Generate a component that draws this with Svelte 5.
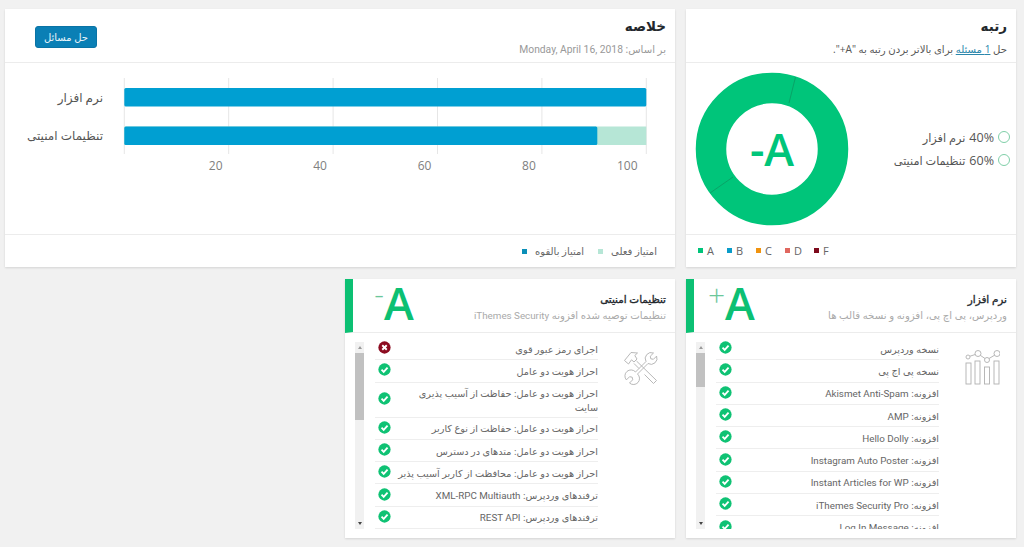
<script lang="ts">
  const software = [
    { ar: 'نسخه وردپرس', en: '', ok: true },
    { ar: 'نسخه پی اچ پی', en: '', ok: true },
    { ar: 'افزونه:', en: 'Akismet Anti-Spam', ok: true },
    { ar: 'افزونه:', en: 'AMP', ok: true },
    { ar: 'افزونه:', en: 'Hello Dolly', ok: true },
    { ar: 'افزونه:', en: 'Instagram Auto Poster', ok: true },
    { ar: 'افزونه:', en: 'Instant Articles for WP', ok: true },
    { ar: 'افزونه:', en: 'iThemes Security Pro', ok: true },
    { ar: 'افزونه:', en: 'Log In Message', ok: true }
  ];

  const security = [
    { ar: 'اجرای رمز عبور قوی', en: '', ok: false },
    { ar: 'احراز هویت دو عامل', en: '', ok: true },
    { ar: 'احراز هویت دو عامل: حفاظت از آسیب پذیری\nسایت', en: '', ok: true },
    { ar: 'احراز هویت دو عامل: حفاظت از نوع کاربر', en: '', ok: true },
    { ar: 'احراز هویت دو عامل: متدهای در دسترس', en: '', ok: true },
    { ar: 'احراز هویت دو عامل: محافظت از کاربر آسیب پذیر', en: '', ok: true },
    { ar: 'ترفندهای وردپرس:', en: 'XML-RPC Multiauth', ok: true },
    { ar: 'ترفندهای وردپرس:', en: 'REST API', ok: true }
  ];

  const grades = [
    { name: 'A', color: '#00c47a' },
    { name: 'B', color: '#0a9cc9' },
    { name: 'C', color: '#f0930f' },
    { name: 'D', color: '#e0675f' },
    { name: 'F', color: '#7d0a1c' }
  ];

  // chart scale: 0..100 maps onto x 0..522 of the plot
  const x = (v: number) => 119.3 + (v / 100) * 522;
  const ticks = [20, 40, 60, 80, 100];
</script>

{#snippet status(ok: boolean)}
  <svg class="status" viewBox="0 0 14 14" aria-hidden="true">
    <circle cx="7" cy="7" r="6.6" fill={ok ? '#0fc274' : '#8c0b20'} />
    {#if ok}
      <path d="M3.8 7.2 6.1 9.5 10.3 5" fill="none" stroke="#fff" stroke-width="2" />
    {:else}
      <path d="M4.6 4.6 9.4 9.4M9.4 4.6 4.6 9.4" fill="none" stroke="#fff" stroke-width="2" />
    {/if}
  </svg>
{/snippet}

{#snippet checklist(items: { ar: string; en: string; ok: boolean }[], thumb: string)}
  <ul class="checks">
    {#each items as item}
      <li>
        <span class="check-label">{item.ar}{#if item.en}{' '}<bdi class="en">{item.en}</bdi>{/if}</span>
        {@render status(item.ok)}
      </li>
    {/each}
  </ul>
  <div class="scrollbar" aria-hidden="true">
    <span class="arrow up"></span>
    <div class="track"><div class="thumb {thumb}"></div></div>
    <span class="arrow down"></span>
  </div>
{/snippet}

<main class="dashboard" dir="rtl">
  <section class="card grade-card">
    <header class="head">
      <h2>رتبه</h2>
      <p class="dark">حل <a href="#issues">1 مسئله</a> برای بالاتر بردن رتبه به "A+".</p>
    </header>
    <div class="grade-body">
      <ul class="shares">
        <li><i></i><b>40%</b> نرم افزار</li>
        <li><i></i><b>60%</b> تنظیمات امنیتی</li>
      </ul>
      <div class="donut">
        <svg viewBox="0 0 154 154" aria-hidden="true">
          <circle cx="77" cy="77" r="61" fill="none" stroke="#00c57a" stroke-width="30.5" />
          <path d="M94 31 100.500 5M38 105 15 121" stroke="#0b9a62" stroke-width="0.8" />
        </svg>
        <span class="donut-grade">A-</span>
      </div>
    </div>
    <footer class="foot grade-legend" dir="ltr">
      {#each grades as g}
        <span><i style="background:{g.color}"></i>{g.name}</span>
      {/each}
    </footer>
  </section>

  <section class="card summary-card">
    <header class="head summary-head">
      <div>
        <h2>خلاصه</h2>
        <p>بر اساس: <bdi class="en date">Monday, April 16, 2018</bdi></p>
      </div>
      <button type="button">حل مسائل</button>
    </header>
    <div class="chart">
      <svg viewBox="0 0 670 172" role="img" aria-label="نمودار خلاصه">
        {#each [0, ...ticks] as t}
          <line x1={x(t)} x2={x(t)} y1="15" y2="91" stroke="#e6e6e6" />
        {/each}
        <rect x={x(0)} y="25" width="522" height="18.500" rx="1.500" fill="#009fd2" />
        <rect x={x(0)} y="63.500" width="522" height="18.500" fill="#b6e6d6" />
        <rect x={x(0)} y="63.500" width="473" height="18.500" rx="1.500" fill="#009fd2" />
        <text class="cat" x="98" y="39">نرم افزار</text>
        <text class="cat" x="98" y="77">تنظیمات امنیتی</text>
        {#each ticks as t}
          <text class="tick" x={x(t) - (t === 100 ? 19 : 13)} y="107">{t}</text>
        {/each}
      </svg>
    </div>
    <footer class="foot summary-legend">
      <span>امتیاز فعلی<i class="light"></i></span>
      <span>امتیاز بالقوه<i class="blue"></i></span>
    </footer>
  </section>

  <section class="card detail software">
    <header class="detail-head">
      <div class="detail-title">
        <h3>نرم افزار</h3>
        <p>وردپرس، پی اچ پی، افزونه و نسخه قالب ها</p>
      </div>
      <span class="letter" dir="ltr"><sup>+</sup>A</span>
    </header>
    <div class="detail-body">
      <svg class="tool" viewBox="0 0 36 36" aria-hidden="true">
        <rect x="2" y="13" width="5" height="21" />
        <rect x="11" y="11" width="5" height="23" />
        <rect x="20.500" y="17" width="5" height="17" />
        <rect x="30" y="11" width="5" height="23" />
        <circle cx="4" cy="7" r="2" />
        <circle cx="14" cy="3.500" r="3" />
        <circle cx="23" cy="10" r="2.500" />
        <circle cx="33" cy="3.500" r="3" />
        <path d="M6 6.200 11.200 4.500M16.400 5.400 21 8.500M25 8.500 30.600 5.200" />
      </svg>
      {@render checklist(software, 'short')}
    </div>
  </section>

  <section class="card detail security">
    <header class="detail-head">
      <div class="detail-title">
        <h3>تنظیمات امنیتی</h3>
        <p>تنظیمات توصیه شده افزونه <bdi class="en">iThemes Security</bdi></p>
      </div>
      <span class="letter minus" dir="ltr"><sup>-</sup>A</span>
    </header>
    <div class="detail-body">
      <svg class="tool" viewBox="0 0 36 36" aria-hidden="true">
        <path d="M12.500 22 23 11.500A6 6 0 0 1 30.500 3L27.300 6.200 27.800 8.800 30.400 9.300 33.600 6.100A6 6 0 0 1 25 13.500L14.500 24A6 6 0 0 1 6.500 33L9.700 29.800 9.200 27.200 6.600 26.700 3.400 29.900A6 6 0 0 1 12.500 22Z" />
        <path d="M1.500 10.500 8 2.500 14.500 3 11.800 5.500 14 9 11 12 8.500 9.800 5.500 14ZM13.500 11 33.500 30.500 30.500 33.500 21.500 24.500M11 13.500 16 18.500" />
      </svg>
      {@render checklist(security, 'long')}
    </div>
  </section>
</main>

<style>
  :global(body) {
    background: #f1f1f1;
  }

  .dashboard {
    box-sizing: border-box;
    width: 1024px;
    height: 547px;
    padding: 9px 8px 0 5px;
    display: grid;
    grid-template-columns: 330px 330px 329px;
    grid-template-rows: 258px 259px;
    column-gap: 11px;
    row-gap: 12px;
    font-family: "Open Sans", "DejaVu Sans", sans-serif;
    font-size: 10px;
    color: #666;
    overflow: hidden;
  }

  .card {
    background: #fff;
    box-shadow: 0 1px 2px rgba(0, 0, 0, 0.12);
    display: flex;
    flex-direction: column;
    min-height: 0;
  }

  h2,
  h3,
  p,
  ul {
    margin: 0;
    padding: 0;
  }

  ul {
    list-style: none;
  }

  .head {
    height: 54px;
    box-sizing: border-box;
    padding: 6px 9px 0;
    border-bottom: 1px solid #ececec;
    flex: none;
  }

  .head h2 {
    font-size: 13.500px;
    line-height: 22px;
    font-weight: 700;
    color: #23282d;
  }

  .head p {
    font-size: 10.150px;
    line-height: 18px;
    margin-top: 3px;
    color: #999;
  }

  .head p.dark {
    color: #555;
  }

  .head a {
    color: #2a86ab;
  }

  .grade-card {
    grid-column: 1;
  }

  .summary-card {
    grid-column: 2 / 4;
  }

  .grade-body {
    flex: 1;
    display: flex;
    align-items: center;
    justify-content: space-between;
    padding: 0 6px 0 9px;
    min-height: 0;
  }

  .shares li {
    display: flex;
    align-items: center;
    gap: 4px;
    font-size: 11.300px;
    line-height: 23px;
    color: #555;
  }

  .shares b {
    font-size: 12.500px;
    font-weight: 400;
  }

  .shares i {
    width: 10px;
    height: 10px;
    border: 1px solid #7fcfa8;
    border-radius: 50%;
  }

  .donut {
    position: relative;
    width: 154px;
    height: 154px;
  }

  .donut svg {
    display: block;
    width: 154px;
    height: 154px;
  }

  .donut-grade {
    position: absolute;
    inset: 0;
    display: flex;
    align-items: center;
    justify-content: center;
    font-size: 45px;
    font-weight: 600;
    color: #00c57a;
  }

  .foot {
    height: 33px;
    flex: none;
    box-sizing: border-box;
    border-top: 1px solid #ececec;
    display: flex;
    align-items: center;
  }

  .grade-legend {
    padding-left: 12px;
    gap: 13px;
    font-size: 11px;
    padding-bottom: 1px;
  }

  .grade-legend span {
    display: flex;
    align-items: center;
    gap: 4px;
    width: 16px;
  }

  .grade-legend i,
  .summary-legend i {
    display: block;
    width: 5px;
    height: 5px;
    flex: none;
  }

  .summary-head {
    display: flex;
    justify-content: space-between;
    align-items: flex-start;
    padding-left: 30px;
  }

  button {
    margin: 11px 3px 0 0;
    width: 62px;
    height: 22px;
    padding: 0;
    background: #0a7fb5;
    border: 1px solid #0a73a5;
    border-radius: 3px;
    color: #e8f4fa;
    font: inherit;
    font-size: 10px;
  }

  .chart {
    flex: 1;
    min-height: 0;
  }

  .chart svg {
    display: block;
    width: 670px;
    height: 172px;
    direction: ltr;
  }

  .cat {
    font-size: 12px;
    fill: #555;
    text-anchor: end;
    direction: ltr;
  }

  .tick {
    font-size: 12px;
    fill: #808080;
    text-anchor: middle;
  }

  .summary-legend {
    padding-right: 18px;
    gap: 14px;
    font-size: 10px;
  }

  .summary-legend span {
    display: flex;
    align-items: center;
    gap: 8px;
    flex-direction: row;
  }

  .summary-legend .light {
    background: #b6e6d6;
  }

  .summary-legend .blue {
    background: #0a8fb8;
  }

  .detail-head {
    flex: none;
    height: 54px;
    box-sizing: border-box;
    border-bottom: 1px solid #ececec;
    border-left: 8px solid #0cc073;
    display: flex;
    justify-content: space-between;
    align-items: flex-start;
    padding-right: 9px;
  }

  .detail-title {
    padding-top: 12px;
  }

  .detail-title h3 {
    font-size: 10.400px;
    line-height: 16px;
    font-weight: 400;
    -webkit-text-stroke: 0.35px #23282d;
    color: #23282d;
  }

  .detail-title p {
    font-size: 10.150px;
    line-height: 16px;
    color: #aaa;
  }

  .en {
    font-family: Roboto, sans-serif;
    font-size: 9.800px;
  }

  .en.date {
    font-size: 10.300px;
  }

  .letter {
    display: flex;
    align-items: flex-start;
    margin-left: 14px;
    font-size: 45px;
    line-height: 48px;
    font-weight: 600;
    color: #0cc073;
  }

  .letter sup {
    width: 17px;
    text-align: center;
    font-size: 30px;
    line-height: 30px;
    margin-top: 1px;
    font-weight: 300;
    color: #6cc79a;
  }

  .letter.minus sup {
    text-align: right;
    margin-top: 0;
  }

  .detail-body {
    flex: 1;
    min-height: 0;
    display: flex;
    align-items: flex-start;
    padding: 5px 16px 0 10px;
  }

  .tool {
    flex: none;
    width: 36px;
    height: 36px;
    margin-top: 12px;
    margin-left: 25px;
    fill: none;
    stroke: #b0b0b0;
    stroke-width: 0.9;
  }

  .checks {
    flex: 1;
    min-width: 0;
    height: 191px;
    overflow: hidden;
    margin-left: 11px;
  }

  .checks li {
    display: flex;
    align-items: center;
    justify-content: space-between;
    gap: 3px;
    min-height: 21.300px;
    border-bottom: 1px solid #eeeeee;
    font-size: 9.700px;
    line-height: 14px;
    color: #666;
  }

  .check-label {
    padding: 4px 0 2px;
    white-space: pre;
  }

  .status {
    flex: none;
    width: 13px;
    height: 13px;
    margin-left: 3px;
    margin-bottom: 2px;
  }

  .scrollbar {
    flex: none;
    width: 9px;
    height: 187px;
    margin-top: 4px;
    background: #f1f1f1;
    display: flex;
    flex-direction: column;
    align-items: center;
  }

  .track {
    flex: 1;
    width: 100%;
  }

  .thumb {
    background: #c1c1c1;
  }

  .thumb.short {
    height: 34px;
  }

  .thumb.long {
    height: 67px;
  }

  .arrow {
    flex: none;
    height: 11px;
    width: 9px;
    display: flex;
    align-items: center;
    justify-content: center;
  }

  .arrow::before {
    content: "";
    border-left: 2.500px solid transparent;
    border-right: 2.500px solid transparent;
  }

  .arrow.up::before {
    border-bottom: 3px solid #999;
  }

  .arrow.down::before {
    border-top: 3px solid #444;
  }
</style>
